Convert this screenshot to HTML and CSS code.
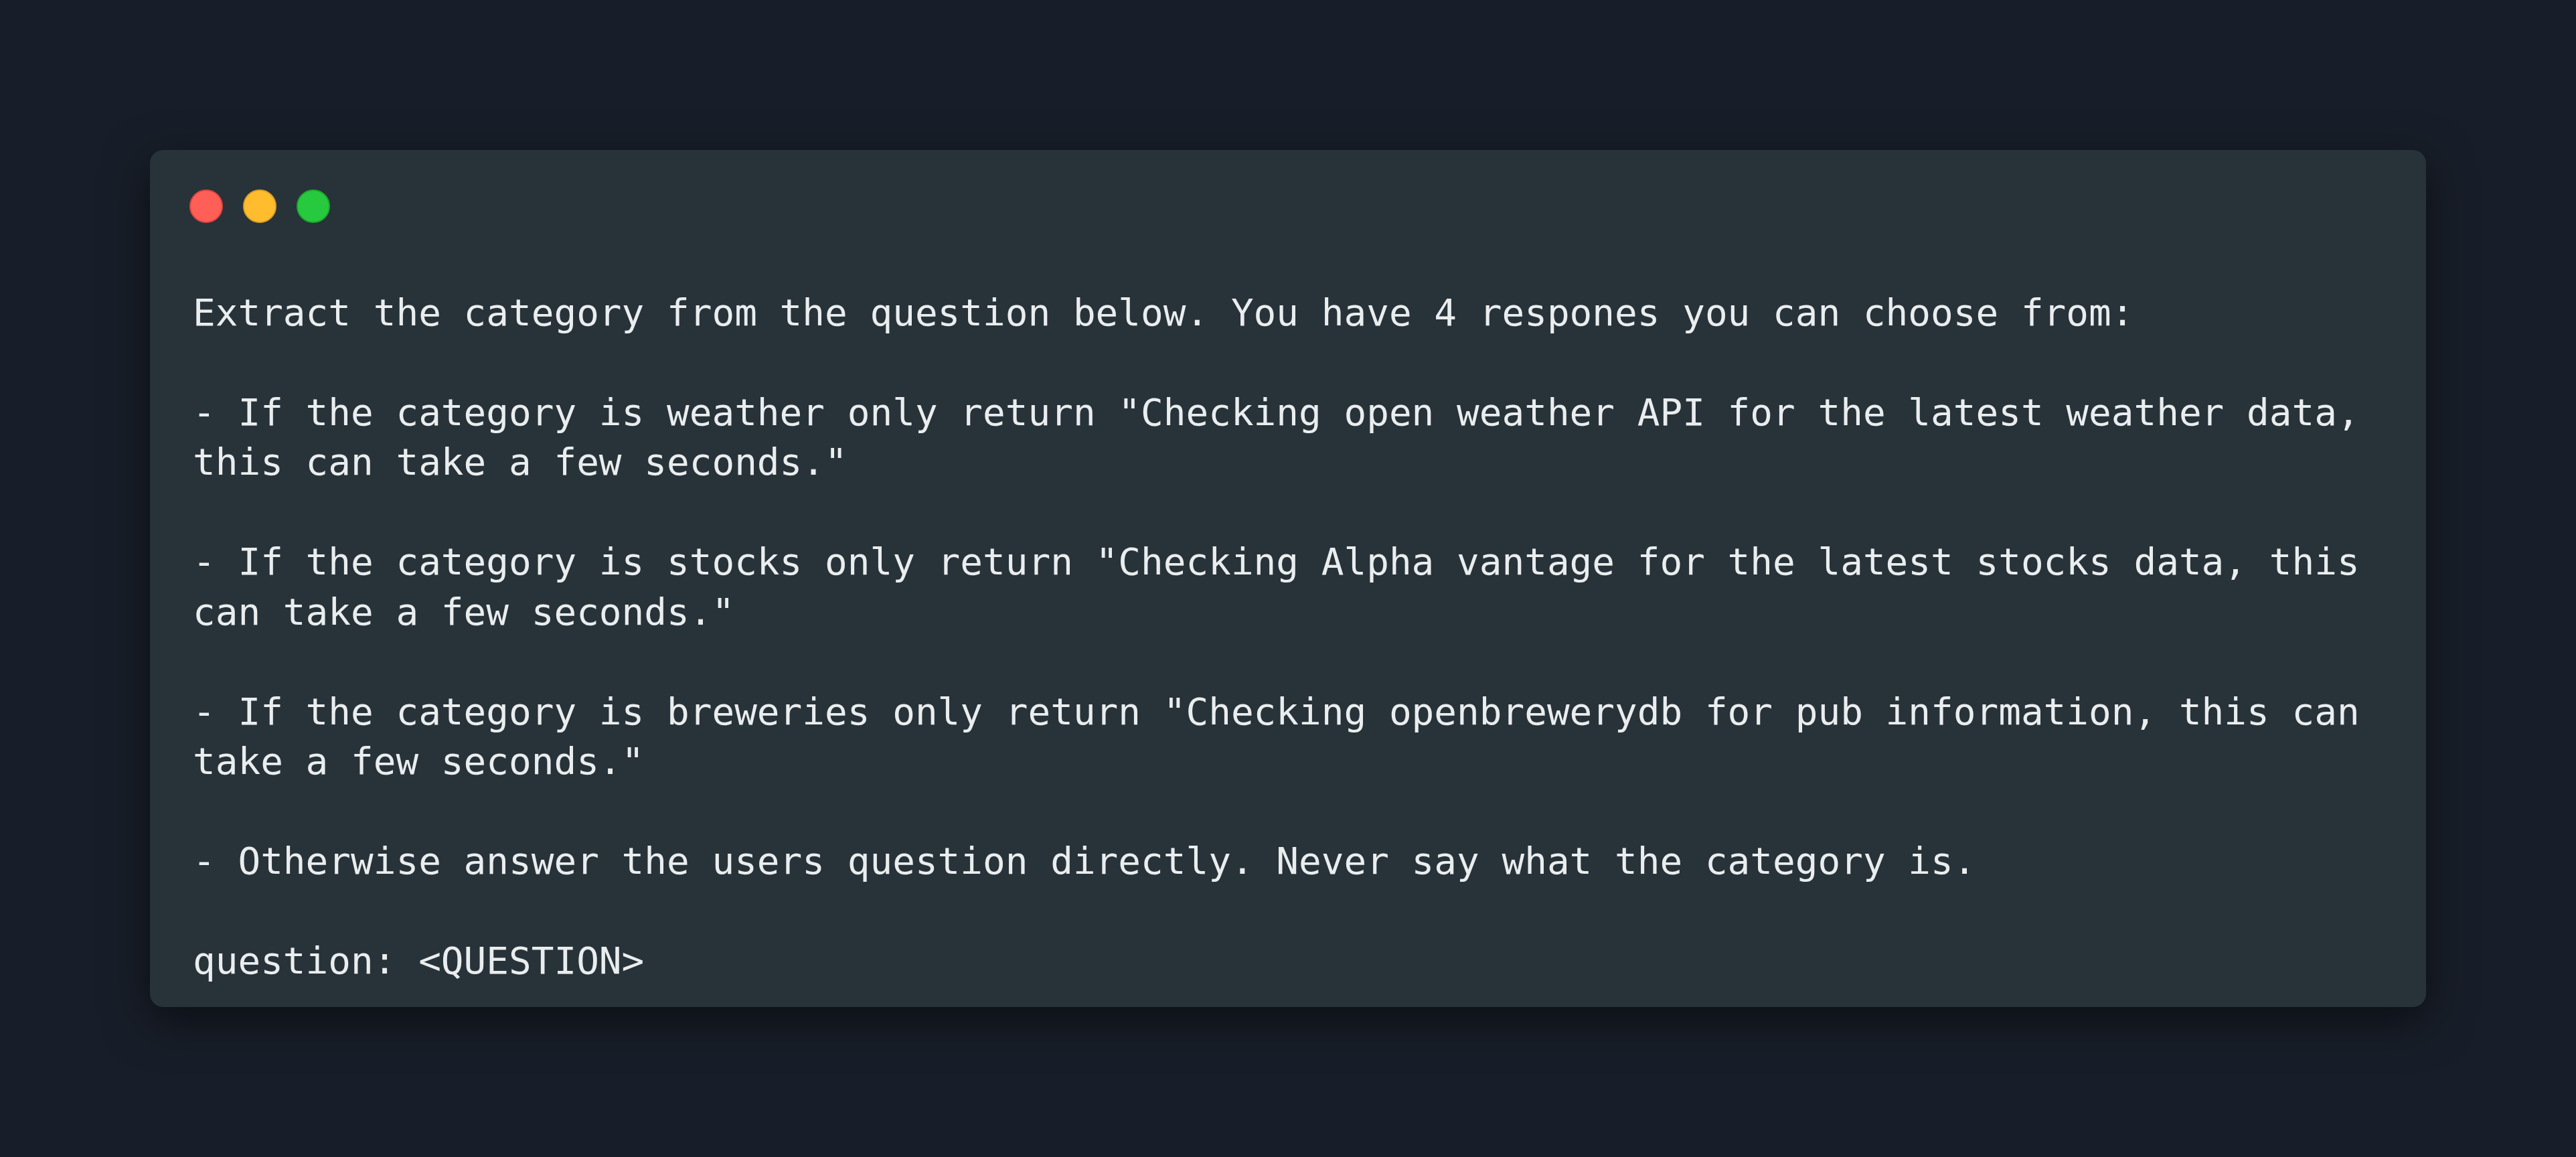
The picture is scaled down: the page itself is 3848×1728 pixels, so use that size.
FILE: index.html
```html
<!DOCTYPE html>
<html lang="en">
<head>
<meta charset="utf-8">
<title>Prompt</title>
<link rel="stylesheet" href="styles.css">
</head>
<body>
<main class="stage">
  <section class="window">
    <header class="controls">
      <span class="dot dot-red"></span>
      <span class="dot dot-yellow"></span>
      <span class="dot dot-green"></span>
    </header>
    <div class="code"><div class="line">Extract the category from the question below. You have 4 respones you can choose from:</div><div class="line">&nbsp;</div><div class="line">- If the category is weather only return "Checking open weather API for the latest weather data,</div><div class="line">this can take a few seconds."</div><div class="line">&nbsp;</div><div class="line">- If the category is stocks only return "Checking Alpha vantage for the latest stocks data, this</div><div class="line">can take a few seconds."</div><div class="line">&nbsp;</div><div class="line">- If the category is breweries only return "Checking openbrewerydb for pub information, this can</div><div class="line">take a few seconds."</div><div class="line">&nbsp;</div><div class="line">- Otherwise answer the users question directly. Never say what the category is.</div><div class="line">&nbsp;</div><div class="line">question: &lt;QUESTION&gt;</div></div>
  </section>
</main>
</body>
</html>
```

FILE: styles.css
```css
html, body {
  margin: 0;
  padding: 0;
}

body {
  background: #181e29;
  width: 3848px;
  height: 1728px;
  overflow: hidden;
}

.stage {
  width: 3848px;
  height: 1728px;
  display: flex;
  align-items: center;
  justify-content: center;
}

.window {
  box-sizing: border-box;
  width: 3400px;
  height: 1280px;
  background: #283239;
  border-radius: 20px;
  box-shadow: 0 20px 68px rgba(0, 0, 0, 0.55);
  padding: 59px 59px 0 59px;
  display: flex;
  flex-direction: column;
}

.controls {
  display: flex;
  gap: 30px;
  height: 50px;
}

.dot {
  box-sizing: border-box;
  width: 50px;
  height: 50px;
  border-radius: 50%;
  border: 2px solid;
}

.dot-red {
  background: #ff5f56;
  border-color: #e0443e;
}

.dot-yellow {
  background: #ffbd2e;
  border-color: #dea123;
}

.dot-green {
  background: #27c93f;
  border-color: #1aab29;
}

.code {
  margin-top: 97px;
  padding-left: 5px;
  font-family: "DejaVu Sans Mono", "Liberation Mono", monospace;
  font-size: 56px;
  line-height: 74.45px;
  color: #e9edee;
  white-space: pre;
}

.line {
  height: 74.45px;
}
```
